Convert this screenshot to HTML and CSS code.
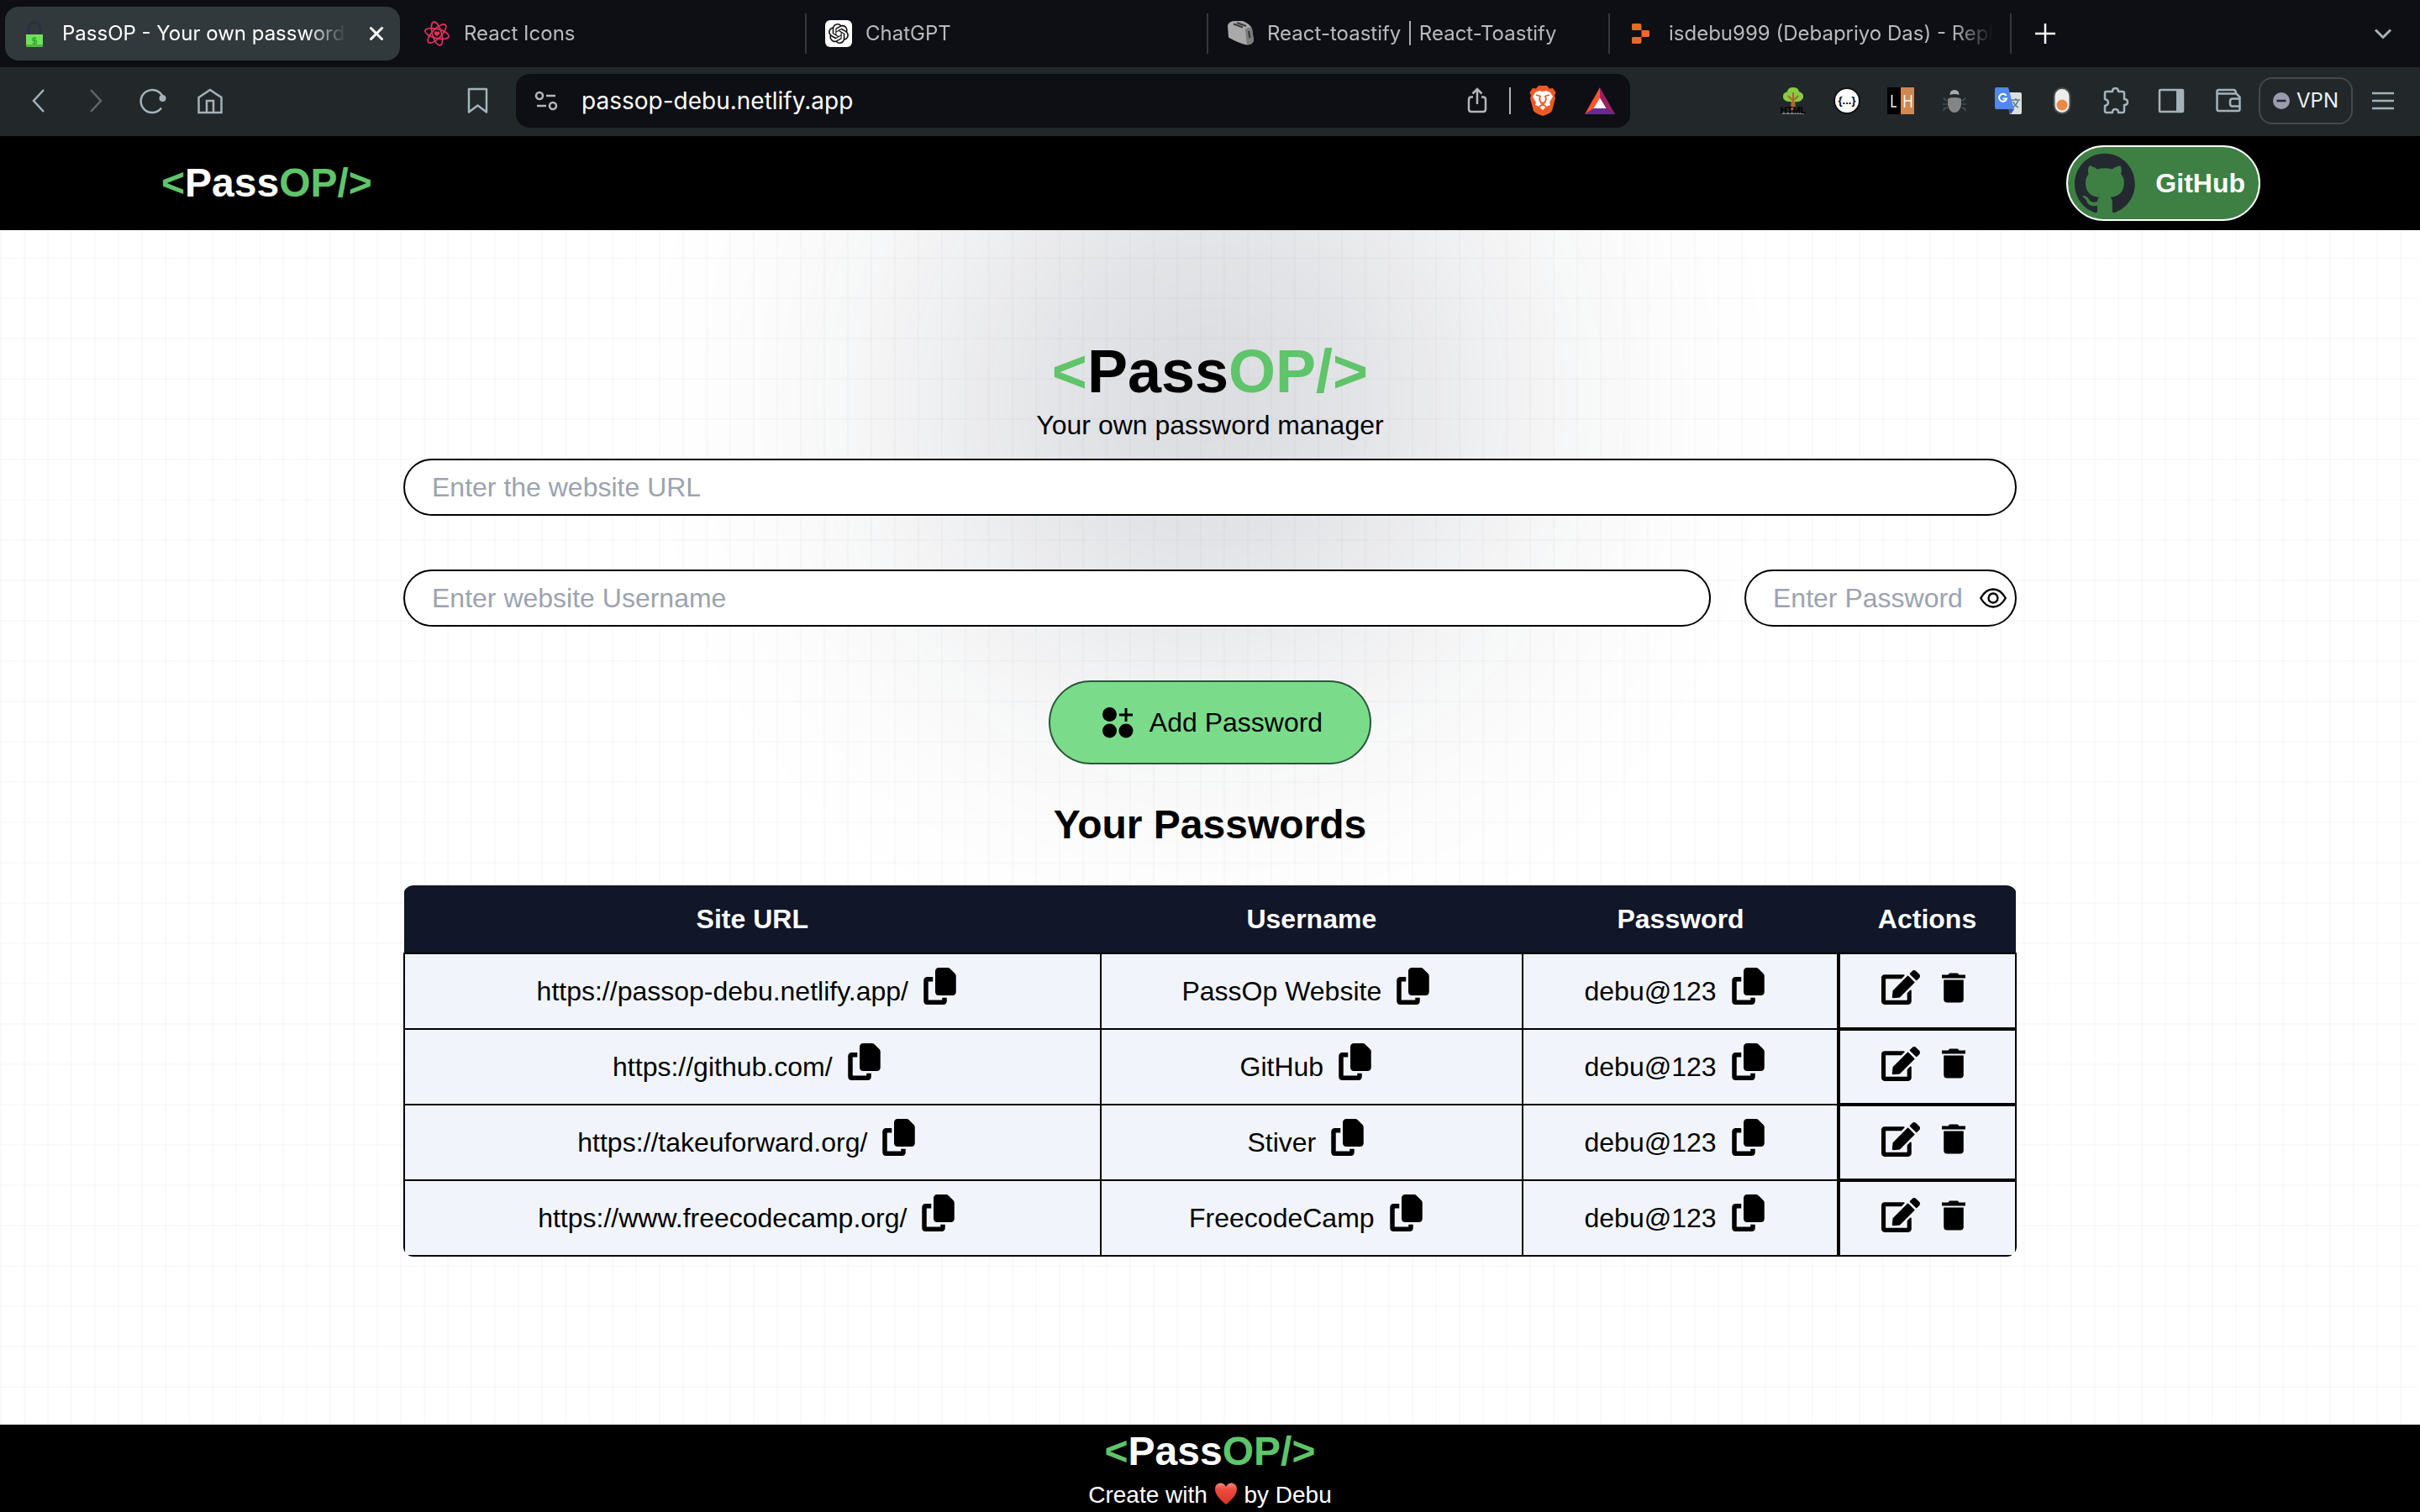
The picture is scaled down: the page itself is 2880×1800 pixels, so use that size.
FILE: index.html
```html
<!DOCTYPE html>
<html lang="en">
<head>
<meta charset="utf-8">
<meta name="viewport" content="width=device-width, initial-scale=1">
<title>PassOP - Your own password manager</title>
<link rel="stylesheet" href="styles.css">
</head>
<body>
<svg class="sprite" aria-hidden="true">
  <symbol id="copy" viewBox="0 0 448 512"><path d="M208 0H332.1c12.7 0 24.9 5.1 33.9 14.1l67.9 67.9c9 9 14.1 21.2 14.1 33.9V336c0 26.5-21.5 48-48 48H208c-26.5 0-48-21.5-48-48V48c0-26.5 21.5-48 48-48zM48 128h80v64H64V448H256V416h64v48c0 26.5-21.5 48-48 48H48c-26.5 0-48-21.5-48-48V176c0-26.5 21.5-48 48-48z"/></symbol>
  <symbol id="edit" viewBox="0 0 576 512"><path d="M402.6 83.2l90.2 90.2c3.8 3.8 3.8 10 0 13.8L274.4 405.6l-92.8 10.3c-12.4 1.4-22.9-9.1-21.5-21.5l10.3-92.8L388.8 83.2c3.8-3.8 10-3.8 13.8 0zm162-22.9l-48.8-48.8c-15.2-15.2-39.9-15.2-55.2 0l-35.4 35.4c-3.8 3.8-3.8 10 0 13.8l90.2 90.2c3.8 3.8 10 3.8 13.8 0l35.4-35.4c15.2-15.3 15.2-40 0-55.2zM384 346.2V448H64V128h229.8c3.2 0 6.2-1.3 8.5-3.5l40-40c7.6-7.6 2.2-20.5-8.5-20.5H48C21.5 64 0 85.5 0 112v352c0 26.5 21.5 48 48 48h352c26.5 0 48-21.5 48-48V306.2c0-10.7-12.9-16-20.5-8.5l-40 40c-2.2 2.3-3.5 5.3-3.5 8.5z"/></symbol>
  <symbol id="trash" viewBox="0 0 28 36"><path d="M0 2.6h7.4L9.2.6h9.6l1.8 2H28v4H0zM2.2 8.400h23.6v23.2a4 4 0 0 1-4 4H6.2a4 4 0 0 1-4-4z"/></symbol>
</svg>

<div class="tabs">
  <button class="tab tab-active" type="button">
    <svg class="icon" viewBox="0 0 32 32"><path d="M8 16V10a6.500 7 0 0 1 14 0v6" fill="none" stroke="#2a2f42" stroke-width="2.400"/><path d="M5 17h20v13q0 2-2 2H7q-2 0-2-2z" fill="#6fe35a"/><path d="M5 29h20v1q0 2-2 2H7q-2 0-2-2z" fill="#4fb843"/><path d="M17.500 21.500q-5-1-5 1.300t2.700 1.700 2.300 2-5 1.300M15 20v9" fill="none" stroke="#3fa83a" stroke-width="1.600"/></svg>
    <span class="tab-title">PassOP - Your own password manager</span>
    <svg class="close" viewBox="0 0 16 16"><path d="M1.500 1.500l13 13M14.500 1.500l-13 13" fill="none" stroke="#fff" stroke-width="3" stroke-linecap="round"/></svg>
  </button>
  <button class="tab" type="button">
    <svg class="icon" viewBox="0 0 32 32"><g fill="none" stroke="#e0335f" stroke-width="1.700"><ellipse cx="16" cy="16" rx="14.500" ry="5.500" transform="rotate(14 16 16)"/><ellipse cx="16" cy="16" rx="14.500" ry="5.500" transform="rotate(74 16 16)"/><ellipse cx="16" cy="16" rx="14.500" ry="5.500" transform="rotate(134 16 16)"/></g><path d="M16 19.500l-3.200-3.200a2 2 0 0 1 3.200-2.300 2 2 0 0 1 3.200 2.300z" fill="#e0335f"/></svg>
    <span class="tab-title">React Icons</span>
  </button>
  <button class="tab" type="button">
    <svg class="icon" viewBox="0 0 32 32"><rect width="32" height="32" rx="6" fill="#fff"/><path transform="translate(4 4)" fill="#111" d="M22.2819 9.8211a5.9847 5.9847 0 0 0-.5157-4.9108 6.0462 6.0462 0 0 0-6.5098-2.9A6.0651 6.0651 0 0 0 4.9807 4.1818a5.9847 5.9847 0 0 0-3.9977 2.9 6.0462 6.0462 0 0 0 .7427 7.0966 5.98 5.98 0 0 0 .511 4.9107 6.051 6.051 0 0 0 6.5146 2.9001A5.9847 5.9847 0 0 0 13.2599 24a6.0557 6.0557 0 0 0 5.7718-4.2058 5.9894 5.9894 0 0 0 3.9977-2.9001 6.0557 6.0557 0 0 0-.7475-7.0729zm-9.022 12.6081a4.4755 4.4755 0 0 1-2.8764-1.0408l.1419-.0804 4.7783-2.7582a.7948.7948 0 0 0 .3927-.6813v-6.7369l2.02 1.1686a.071.071 0 0 1 .038.052v5.5826a4.504 4.504 0 0 1-4.4945 4.4944zm-9.6607-4.1254a4.4708 4.4708 0 0 1-.5346-3.0137l.142.0852 4.783 2.7582a.7712.7712 0 0 0 .7806 0l5.8428-3.3685v2.3324a.0804.0804 0 0 1-.0332.0615L9.74 19.9502a4.4992 4.4992 0 0 1-6.1408-1.6464zM2.3408 7.8956a4.485 4.485 0 0 1 2.3655-1.9728V11.6a.7664.7664 0 0 0 .3879.6765l5.8144 3.3543-2.0201 1.1685a.0757.0757 0 0 1-.071 0l-4.8303-2.7865A4.504 4.504 0 0 1 2.3408 7.872zm16.5963 3.8558L13.1038 8.364 15.1192 7.2a.0757.0757 0 0 1 .071 0l4.8303 2.7913a4.4944 4.4944 0 0 1-.6765 8.1042v-5.6772a.79.79 0 0 0-.407-.667zm2.0107-3.0231l-.142-.0852-4.7735-2.7818a.7759.7759 0 0 0-.7854 0L9.409 9.2297V6.8974a.0662.0662 0 0 1 .0284-.0615l4.8303-2.7866a4.4992 4.4992 0 0 1 6.6802 4.66zM8.3065 12.863l-2.02-1.1638a.0804.0804 0 0 1-.038-.0567V6.0742a4.4992 4.4992 0 0 1 7.3757-3.4537l-.142.0805L8.704 5.459a.7948.7948 0 0 0-.3927.6813zm1.0976-2.3654l2.602-1.4998 2.6069 1.4998v2.9994l-2.5974 1.4997-2.6067-1.4997Z"/></svg>
    <span class="tab-title">ChatGPT</span>
  </button>
  <button class="tab" type="button">
    <svg class="icon" viewBox="0 0 32 32"><path d="M1 6Q3 1 10 1h9q8 3 11 9l2 14q-1 5-8 5.500-10-2-22-9z" fill="#a9a9a9"/><path d="M22 11q4-4 8-1l2 14q-1 5-8 5.500z" fill="#7b7b7b"/><path d="M8 4.500l11 4M12 3l11 4" stroke="#3b3b3b" stroke-width="2"/><path d="M26 13l1.500 8" stroke="#333" stroke-width="2"/></svg>
    <span class="tab-title">React-toastify | React-Toastify</span>
  </button>
  <button class="tab" type="button">
    <svg class="icon" viewBox="0 0 32 32"><path d="M5.500 4h8q2 0 2 2v6h-10q-1.500 0-1.500-1.500v-5Q4 4 5.500 4zM15.500 12h8q1.500 0 1.500 1.500v5q0 1.500-1.500 1.500h-8zM5.500 20h10v6q0 2-2 2h-8Q4 28 4 26.500v-5Q4 20 5.500 20z" fill="#e8692a"/></svg>
    <span class="tab-title">isdebu999 (Debapriyo Das) - Replit</span>
  </button>
  <button class="icon-button new-tab" type="button" aria-label="New tab"><svg viewBox="0 0 24 24"><path d="M12 0v24M0 12h24" fill="none" stroke="#fff" stroke-width="2.500"/></svg></button>
  <button class="icon-button tab-list" type="button" aria-label="Search tabs"><svg viewBox="0 0 24 24"><path d="M3 7.500l9 9 9-9" fill="none" stroke="#a3b2bb" stroke-width="3"/></svg></button>
</div>

<div class="toolbar">
  <div class="toolbar-left">
    <div class="history">
      <button class="icon-button" type="button" aria-label="Back"><svg class="icon" viewBox="0 0 32 32"><path d="M22 3L10 16l12 13" class="line"/></svg></button>
      <button class="icon-button dim" type="button" aria-label="Forward"><svg class="icon" viewBox="0 0 32 32"><path d="M10 3l12 13-12 13" class="line"/></svg></button>
      <button class="icon-button" type="button" aria-label="Reload"><svg class="icon" viewBox="0 0 32 32"><path d="M26 24.500A13.500 13.500 0 1 1 27.500 11" class="line"/><circle cx="27.500" cy="13" r="4" fill="#a3b2bb"/></svg></button>
      <button class="icon-button" type="button" aria-label="Home"><svg class="icon" viewBox="0 0 32 32"><path d="M2.500 12L16 3l13.500 9v18h-27zM12 30V16h8v14" class="line"/></svg></button>
    </div>
    <button class="icon-button" type="button" aria-label="Bookmark"><svg class="icon" viewBox="0 0 32 32"><path d="M6 2h21v27.500l-10.500-8L6 29.500z" class="line" stroke-linejoin="round"/></svg></button>
  </div>
  <div class="address">
    <svg class="icon" viewBox="0 0 32 32"><g fill="none" stroke="#b4b5b8" stroke-width="2.600"><circle cx="8" cy="10" r="4"/><path d="M16 10h11M5 22h11"/><circle cx="24" cy="22" r="4"/></g></svg>
    <input class="address-input" type="text" value="passop-debu.netlify.app" aria-label="Address">
    <button class="icon-button" type="button" aria-label="Share"><svg class="icon" viewBox="0 0 32 32"><path d="M11 11.500H9q-3 0-3 3V26q0 3 3 3h14q3 0 3-3V14.500q0-3-3-3h-2M16 20V2M10.500 7.500L16 2l5.500 5.500" fill="none" stroke="#b4b5b8" stroke-width="2.500"/></svg></button>
    <span class="address-rule"></span>
    <button class="icon-button" type="button" aria-label="Shields"><svg class="shield" viewBox="0 0 32 36"><path d="M11 0h10l3 3.500 4-.5 3.500 5-1.500 4 1 3-4 15Q25 33 16 36 7 33 5 30L1 15l1-3L.5 8 4 3l4 .5z" fill="#ee5a24"/><path d="M7 8l5-2 4 1 4-1 5 2 3 5-4 7 1 3-5 2-4 4-4-4-5-2 1-3-4-7z" fill="#fff"/><path d="M8 11l5 1.500-1 4 2 4h4l2-4-1-4 5-1.500M12 25l4-3 4 3" fill="none" stroke="#ee5a24" stroke-width="1.800"/></svg></button>
    <button class="icon-button" type="button" aria-label="Rewards"><svg class="rewards" viewBox="0 0 36 32"><path d="M18 0L0 32l11-7 7-12z" fill="#ff5430"/><path d="M18 0l18 32-11-7-7-12z" fill="#9e1f63"/><path d="M0 32h36l-11-7H11z" fill="#662d91"/><path d="M18 12.500L25.500 25h-15z" fill="#fff"/></svg></button>
  </div>
  <div class="toolbar-right">
    <div class="extensions">
      <button class="icon-button" type="button" aria-label="HTML Tree"><svg class="icon" viewBox="0 0 32 32"><path d="M14 10h4l1 17h-6z" fill="#a8682e"/><path d="M16 0q6 0 7 5 6 2 5 7-2 6-9 5h-7q-7 0-8-5-1-5 5-7 1-5 7-5z" fill="#86cc43"/><path d="M16 20V6M10 10l6 6 6-6" fill="none" stroke="#a8682e" stroke-width="2"/><path d="M3 31h26" stroke="#999" stroke-width="1.500"/><text x="16" y="31" class="tree-label">HTML</text></svg></button>
      <button class="icon-button" type="button" aria-label="JSON viewer"><svg class="icon" viewBox="0 0 32 32"><circle cx="16" cy="16" r="15" fill="#fff" stroke="#111" stroke-width="2"/><text x="16" y="20" class="json-label">{...}</text></svg></button>
      <button class="icon-button" type="button" aria-label="LH"><svg class="icon" viewBox="0 0 32 32"><path d="M0 0h16v32H0z"/><path d="M16 0h16v32H16z" fill="#d08852"/><path d="M5.500 9v14H11M20.500 9v15M28.500 9v15M20.500 16h8" fill="none" stroke="#fff" stroke-width="1.600"/></svg></button>
      <button class="icon-button" type="button" aria-label="Bug"><svg class="icon" viewBox="0 0 32 32"><path d="M10.500 9q0-6 5.500-6t5.500 6q-5.500-2-11 0z" fill="#aaa"/><path d="M8 14q1-2 8-2t8 2v7q-2 9-8 9t-8-9z" fill="#858585"/><path d="M7 16l-3-2-1-2M7 20H2M8 24l-4 1-1 3M25 16l3-2 1-2M25 20h5M24 24l4 1 1 3" fill="none" stroke="#555c60" stroke-width="1.200"/></svg></button>
      <button class="icon-button" type="button" aria-label="Translate"><svg class="icon" viewBox="0 0 32 32"><path d="M13 6h17q2 0 2 2v22q0 2-2 2H18z" fill="#dcdedf"/><path d="M16 26h7l-4 6z" fill="#3a4fb0"/><path d="M2 0h14l7 26H2q-2 0-2-2V2q0-2 2-2z" fill="#5288ee"/><path d="M13.500 10A4.500 4.500 0 1 0 14 13.500H9.500" fill="none" stroke="#fff" stroke-width="2"/><path d="M20 15h10M25 13v2M28 15q-2 6-7 9M22 17q2 5 6 7" fill="none" stroke="#607d8b" stroke-width="1.500"/></svg></button>
      <button class="icon-button" type="button" aria-label="Toggle"><svg class="icon" viewBox="0 0 32 32"><rect x="6.500" y="1" width="19" height="30" rx="9.500" fill="#ebecec" stroke="#4b4d50" stroke-width="2"/><circle cx="16" cy="21" r="6.500" fill="#e88945"/></svg></button>
      <button class="icon-button" type="button" aria-label="Extensions"><svg class="icon" viewBox="0 0 32 32"><path d="M5 5h7q0-4 3.500-4T19 5h5q2 0 2 2v7q4 0 4 3.500T26 21v7q0 2-2 2h-5q0-4-3.500-4T12 30H5q-2 0-2-2v-6q4-1 4-4t-4-4V7q0-2 2-2z" class="line" stroke-linejoin="round"/></svg></button>
    </div>
    <div class="panels">
      <button class="icon-button" type="button" aria-label="Sidebar"><svg class="icon" viewBox="0 0 32 32"><rect x="2" y="3" width="28" height="26" rx="1" class="line"/><path d="M22 3h8v26h-8z" fill="#a3b2bb"/></svg></button>
      <button class="icon-button" type="button" aria-label="Wallet"><svg class="icon" viewBox="0 0 32 32"><path d="M2.500 7.500h23l4 4V26q0 2-2 2h-23q-2 0-2-2V5q0-2 2-2H22q3 0 3 4.500M30 13.500H21q-3 0-3 3v3q0 3 3 3h9" class="line"/></svg></button>
    </div>
    <button class="vpn" type="button"><svg viewBox="0 0 20 20"><circle cx="10" cy="10" r="10" fill="#9b9bb0"/><path d="M4.500 10h11" stroke="#22272a" stroke-width="2.500"/></svg>VPN</button>
    <button class="icon-button" type="button" aria-label="Menu"><svg class="icon" viewBox="0 0 32 32"><path d="M3 7h26M3 16h26M3 25h26" class="line"/></svg></button>
  </div>
</div>

<div class="page">
  <div class="glow"></div>
  <nav class="navbar">
    <a class="logo logo-light" href="#"><span class="green">&lt;</span>Pass<span class="green">OP/&gt;</span></a>
    <a class="github" href="#github">
      <svg class="github-mark" viewBox="0 0 98 96"><path fill="#24292f" d="M48.854 0C21.839 0 0 22 0 49.217c0 21.756 13.993 40.172 33.405 46.690 2.427.49 3.316-1.059 3.316-2.362 0-1.141-.08-5.052-.08-9.127-13.590 2.934-16.420-5.867-16.420-5.867-2.184-5.704-5.420-7.170-5.420-7.170-4.448-3.015.324-3.015.324-3.015 4.934.326 7.523 5.052 7.523 5.052 4.367 7.496 11.404 5.378 14.235 4.074.404-3.178 1.699-5.378 3.074-6.600-10.839-1.141-22.243-5.378-22.243-24.283 0-5.378 1.940-9.778 5.014-13.200-.485-1.222-2.184-6.275.486-13.038 0 0 4.125-1.304 13.426 5.052a46.970 46.970 0 0 1 12.214-1.630c4.125 0 8.330.571 12.213 1.630 9.302-6.356 13.427-5.052 13.427-5.052 2.670 6.763.970 11.816.485 13.038 3.155 3.422 5.015 7.822 5.015 13.200 0 18.905-11.404 23.060-22.324 24.283 1.780 1.548 3.316 4.481 3.316 9.126 0 6.600-.08 11.897-.08 13.526 0 1.304.890 2.853 3.316 2.364 19.412-6.520 33.405-24.935 33.405-46.691C97.707 22 75.788 0 48.854 0z"/></svg>
      GitHub
    </a>
  </nav>

  <main class="content">
    <h1 class="logo hero-logo"><span class="green">&lt;</span>Pass<span class="green">OP/&gt;</span></h1>
    <p class="tagline">Your own password manager</p>

    <form class="entry">
      <input class="field" type="text" placeholder="Enter the website URL" aria-label="Website URL">
      <div class="entry-row">
        <input class="field" type="text" placeholder="Enter website Username" aria-label="Website username">
        <div class="field password-field">
          <input class="password-input" type="password" placeholder="Enter Password" aria-label="Password">
          <button class="icon-button" type="button" aria-label="Show password"><svg class="icon" viewBox="0 0 32 32"><path d="M1.200 16Q7 5.500 16 5.500T30.800 16Q25 26.500 16 26.500T1.200 16z" fill="none" stroke="#000" stroke-width="2.300"/><circle cx="16" cy="16" r="5.500" fill="none" stroke="#000" stroke-width="2.300"/></svg></button>
        </div>
      </div>
      <button class="add" type="button"><svg viewBox="0 0 48 48"><circle cx="14.500" cy="14.500" r="8.500"/><circle cx="14.500" cy="34" r="8.500"/><circle cx="34" cy="34" r="8.500"/><path d="M32.500 7h3v6.500H42v3h-6.500V23h-3v-6.500H26v-3h6.500z"/></svg>Add Password</button>
    </form>

    <h2 class="section-title">Your Passwords</h2>
    <div class="table-frame">
      <table class="passwords">
        <colgroup><col class="col-site"><col class="col-user"><col class="col-pass"><col class="col-actions"></colgroup>
        <thead><tr><th scope="col">Site URL</th><th scope="col">Username</th><th scope="col">Password</th><th scope="col">Actions</th></tr></thead>
        <tbody>
          <tr>
            <td><div class="cell"><a href="#">https://passop-debu.netlify.app/</a><button class="icon-button" type="button" aria-label="Copy site"><svg class="copy"><use href="#copy"/></svg></button></div></td>
            <td><div class="cell">PassOp Website<button class="icon-button" type="button" aria-label="Copy username"><svg class="copy"><use href="#copy"/></svg></button></div></td>
            <td><div class="cell">debu@123<button class="icon-button" type="button" aria-label="Copy password"><svg class="copy"><use href="#copy"/></svg></button></div></td>
            <td class="actions"><div class="cell"><button class="icon-button" type="button" aria-label="Edit"><svg class="edit"><use href="#edit"/></svg></button><button class="icon-button" type="button" aria-label="Delete"><svg class="trash"><use href="#trash"/></svg></button></div></td>
          </tr>
          <tr>
            <td><div class="cell"><a href="#">https://github.com/</a><button class="icon-button" type="button" aria-label="Copy site"><svg class="copy"><use href="#copy"/></svg></button></div></td>
            <td><div class="cell">GitHub<button class="icon-button" type="button" aria-label="Copy username"><svg class="copy"><use href="#copy"/></svg></button></div></td>
            <td><div class="cell">debu@123<button class="icon-button" type="button" aria-label="Copy password"><svg class="copy"><use href="#copy"/></svg></button></div></td>
            <td class="actions"><div class="cell"><button class="icon-button" type="button" aria-label="Edit"><svg class="edit"><use href="#edit"/></svg></button><button class="icon-button" type="button" aria-label="Delete"><svg class="trash"><use href="#trash"/></svg></button></div></td>
          </tr>
          <tr>
            <td><div class="cell"><a href="#">https://takeuforward.org/</a><button class="icon-button" type="button" aria-label="Copy site"><svg class="copy"><use href="#copy"/></svg></button></div></td>
            <td><div class="cell">Stiver<button class="icon-button" type="button" aria-label="Copy username"><svg class="copy"><use href="#copy"/></svg></button></div></td>
            <td><div class="cell">debu@123<button class="icon-button" type="button" aria-label="Copy password"><svg class="copy"><use href="#copy"/></svg></button></div></td>
            <td class="actions"><div class="cell"><button class="icon-button" type="button" aria-label="Edit"><svg class="edit"><use href="#edit"/></svg></button><button class="icon-button" type="button" aria-label="Delete"><svg class="trash"><use href="#trash"/></svg></button></div></td>
          </tr>
          <tr>
            <td><div class="cell"><a href="#">https://www.freecodecamp.org/</a><button class="icon-button" type="button" aria-label="Copy site"><svg class="copy"><use href="#copy"/></svg></button></div></td>
            <td><div class="cell">FreecodeCamp<button class="icon-button" type="button" aria-label="Copy username"><svg class="copy"><use href="#copy"/></svg></button></div></td>
            <td><div class="cell">debu@123<button class="icon-button" type="button" aria-label="Copy password"><svg class="copy"><use href="#copy"/></svg></button></div></td>
            <td class="actions"><div class="cell"><button class="icon-button" type="button" aria-label="Edit"><svg class="edit"><use href="#edit"/></svg></button><button class="icon-button" type="button" aria-label="Delete"><svg class="trash"><use href="#trash"/></svg></button></div></td>
          </tr>
        </tbody>
      </table>
    </div>
  </main>

  <footer class="footer">
    <div class="logo logo-light"><span class="green">&lt;</span>Pass<span class="green">OP/&gt;</span></div>
    <p class="credit">Create with <svg class="heart" viewBox="0 0 28 26" role="img" aria-label="love"><defs><linearGradient id="heart-fill" x1="0" y1="0" x2="0" y2="1"><stop offset="0" stop-color="#f58a7c"/><stop offset=".3" stop-color="#ee4a3c"/><stop offset="1" stop-color="#d8362c"/></linearGradient></defs><path d="M14 26Q1 16 1 8q0-7 6.500-7.500Q12 .5 14 5 16 .5 20.500.5 27 1 27 8q0 8-13 18z" fill="url(#heart-fill)"/></svg> by Debu</p>
  </footer>
</div>
</body>
</html>
```

FILE: styles.css
```css
*, *::before, *::after { box-sizing: border-box; }

body {
  margin: 0;
  min-height: 100vh;
  display: flex;
  flex-direction: column;
  background: #fff;
  color: #000;
  font: 32px/48px "Liberation Sans", Arial, sans-serif;
}

h1, h2, p { margin: 0; }
a { color: inherit; text-decoration: none; }
button, input { font: inherit; color: inherit; }
svg { display: block; flex: none; }

.sprite { position: absolute; width: 0; height: 0; }
.icon { width: 32px; height: 32px; }
.icon-button { display: block; flex: none; padding: 0; border: 0; background: none; }
.line { fill: none; stroke: #a3b2bb; stroke-width: 2.5px; }
.dim { opacity: 0.45; }

/* Browser tabs */
.tabs {
  display: flex;
  align-items: center;
  height: 80px;
  padding-left: 6px;
  background: #0e0f14;
  font: 24px/32px Inter, sans-serif;
}
.tab {
  display: flex;
  align-items: center;
  gap: 16px;
  flex: 0 1 478px;
  min-width: 0;
  height: 48px;
  padding: 0 20px 0 22px;
  border: 0;
  border-right: 2px solid #35373b;
  background: none;
  color: #b9babc;
  text-align: left;
}
.tab-active {
  flex-basis: 470px;
  height: 64px;
  padding-left: 20px;
  border: 0;
  border-radius: 16px;
  background: #32393c;
  color: #fff;
}
.tab-active + .tab { flex-basis: 484px; padding-left: 28px; }
.tab-title {
  flex: 1;
  min-width: 0;
  overflow: hidden;
  white-space: nowrap;
  mask-image: linear-gradient(to right, #000 calc(100% - 48px), transparent);
}
.close { width: 16px; height: 16px; margin-left: 12px; }
.new-tab { margin-left: 28px; }
.new-tab svg, .tab-list svg { width: 24px; height: 24px; }
.tab-list { margin: 0 32px 0 auto; }

/* Browser toolbar */
.toolbar {
  display: flex;
  align-items: center;
  height: 82px;
  padding-bottom: 2px;
  background: #22282a;
}
.toolbar-left {
  display: flex;
  justify-content: space-between;
  width: 21.32%;
  padding: 0 30px;
}
.history { display: flex; gap: 36px; }
.address {
  display: flex;
  align-items: center;
  gap: 14px;
  width: 46.04%;
  height: 64px;
  padding: 0 18px 0 20px;
  border-radius: 16px;
  background: #0e0f14;
}
.address-input {
  flex: 1;
  min-width: 0;
  margin-left: 12px;
  padding: 0;
  border: 0;
  background: none;
  color: #fff;
  font: 28px/40px Inter, sans-serif;
}
.address-rule { width: 2px; height: 32px; margin: 0 8px; background: #b4b5b8; }
.shield { width: 32px; height: 36px; }
.rewards { width: 36px; height: 32px; margin-left: 20px; }
.toolbar-right {
  display: flex;
  align-items: center;
  justify-content: flex-end;
  gap: 20px;
  flex: 1;
  padding-right: 28px;
}
.extensions { display: flex; gap: 32px; margin-right: 14px; }
.panels { display: flex; gap: 36px; }
.tree-label { font: bold 11px "Liberation Sans", sans-serif; text-anchor: middle; }
.json-label { font: bold 13px "Liberation Sans", sans-serif; text-anchor: middle; }
.vpn {
  display: flex;
  align-items: center;
  gap: 8px;
  height: 56px;
  padding: 0 15px;
  border: 2px solid #41494d;
  border-radius: 16px;
  background: none;
  color: #f0f1f2;
  font: 24px/32px Inter, sans-serif;
}
.vpn svg { width: 20px; height: 20px; }

/* Page */
.page {
  position: relative;
  isolation: isolate;
  overflow: hidden;
  display: flex;
  flex: 1;
  flex-direction: column;
  background:
    linear-gradient(to right, #8080800a 2px, transparent 2px) 0 0 / 28px 48px,
    linear-gradient(to bottom, #8080800a 2px, transparent 2px) 0 0 / 28px 48px,
    #fff;
}
.glow {
  position: absolute;
  inset: 0 0 auto;
  z-index: -1;
  width: 620px;
  height: 620px;
  margin: 0 auto;
  border-radius: 50%;
  background: #172036;
  opacity: 0.2;
  filter: blur(200px);
}

.logo { font-size: 48px; line-height: 64px; font-weight: 700; }
.logo-light { color: #fff; }
.green { color: #5fc46a; }

.navbar {
  display: flex;
  align-items: center;
  justify-content: space-between;
  height: 112px;
  padding: 0 190px 0 192px;
  background: #000;
}
.github {
  display: flex;
  align-items: center;
  gap: 24px;
  height: 90px;
  padding: 0 16px 0 8px;
  border: 2px solid #fff;
  border-radius: 45px;
  background: #3e8044;
  color: #fff;
  font-weight: 700;
}
.github-mark { width: 72px; height: 72px; }

.content {
  flex: 1;
  width: calc(100% * 2 / 3);
  margin: 0 auto;
  padding: 128px 0 64px;
  text-align: center;
}
.hero-logo { font-size: 72px; line-height: 80px; }

.entry {
  display: flex;
  flex-direction: column;
  align-items: center;
  gap: 64px;
  padding: 16px 0 40px;
}
.entry-row { display: flex; gap: 40px; width: 100%; }
.field {
  width: 100%;
  min-width: 0;
  height: 68px;
  padding: 8px 32px;
  border: 2px solid #000;
  border-radius: 34px;
  background: #fff;
}
::placeholder { color: #9ca3af; opacity: 1; }
.password-field {
  display: flex;
  align-items: center;
  flex: none;
  width: 324px;
  padding-right: 10px;
}
.password-input {
  flex: 1;
  min-width: 0;
  padding: 0;
  border: 0;
  background: none;
}
.add {
  display: flex;
  align-items: center;
  gap: 14px;
  height: 100px;
  padding: 0 56px;
  border: 2px solid #28573a;
  border-radius: 50px;
  background: #7adc8a;
}
.add svg { width: 48px; height: 48px; }

.section-title { font-size: 48px; line-height: 64px; }

.table-frame { margin-top: 40px; overflow: hidden; border-radius: 12px; }
.passwords {
  width: 100%;
  table-layout: fixed;
  border-collapse: collapse;
}
.col-site { width: 43.2%; }
.col-user { width: 26.2%; }
.col-pass { width: 19.6%; }
.col-actions { width: 11%; }
.passwords th {
  height: 81px;
  padding: 0;
  background: #111628;
  color: #fff;
}
.passwords td {
  height: 90px;
  padding: 0;
  border: 2px solid #000;
  background: #f1f5fb;
}
.passwords .actions { border-left-width: 4px; }
.passwords tr + tr .actions { border-top-width: 4px; }
.cell { display: flex; align-items: center; justify-content: center; }
.cell .icon-button { margin-right: 14px; padding-bottom: 12px; }
.copy { width: 39px; height: 44px; margin-left: 18px; }
.actions .cell { gap: 26px; padding-right: 10px; }
.actions .cell .icon-button { margin: 0; padding-bottom: 8px; }
.edit { width: 46px; height: 41px; }
.trash { width: 28px; height: 36px; }

.footer {
  display: flex;
  flex-direction: column;
  align-items: center;
  background: #000;
  color: #fff;
}
.credit { font-size: 28px; line-height: 40px; }
.heart { display: inline-block; width: 28px; height: 26px; vertical-align: -2px; }
```
